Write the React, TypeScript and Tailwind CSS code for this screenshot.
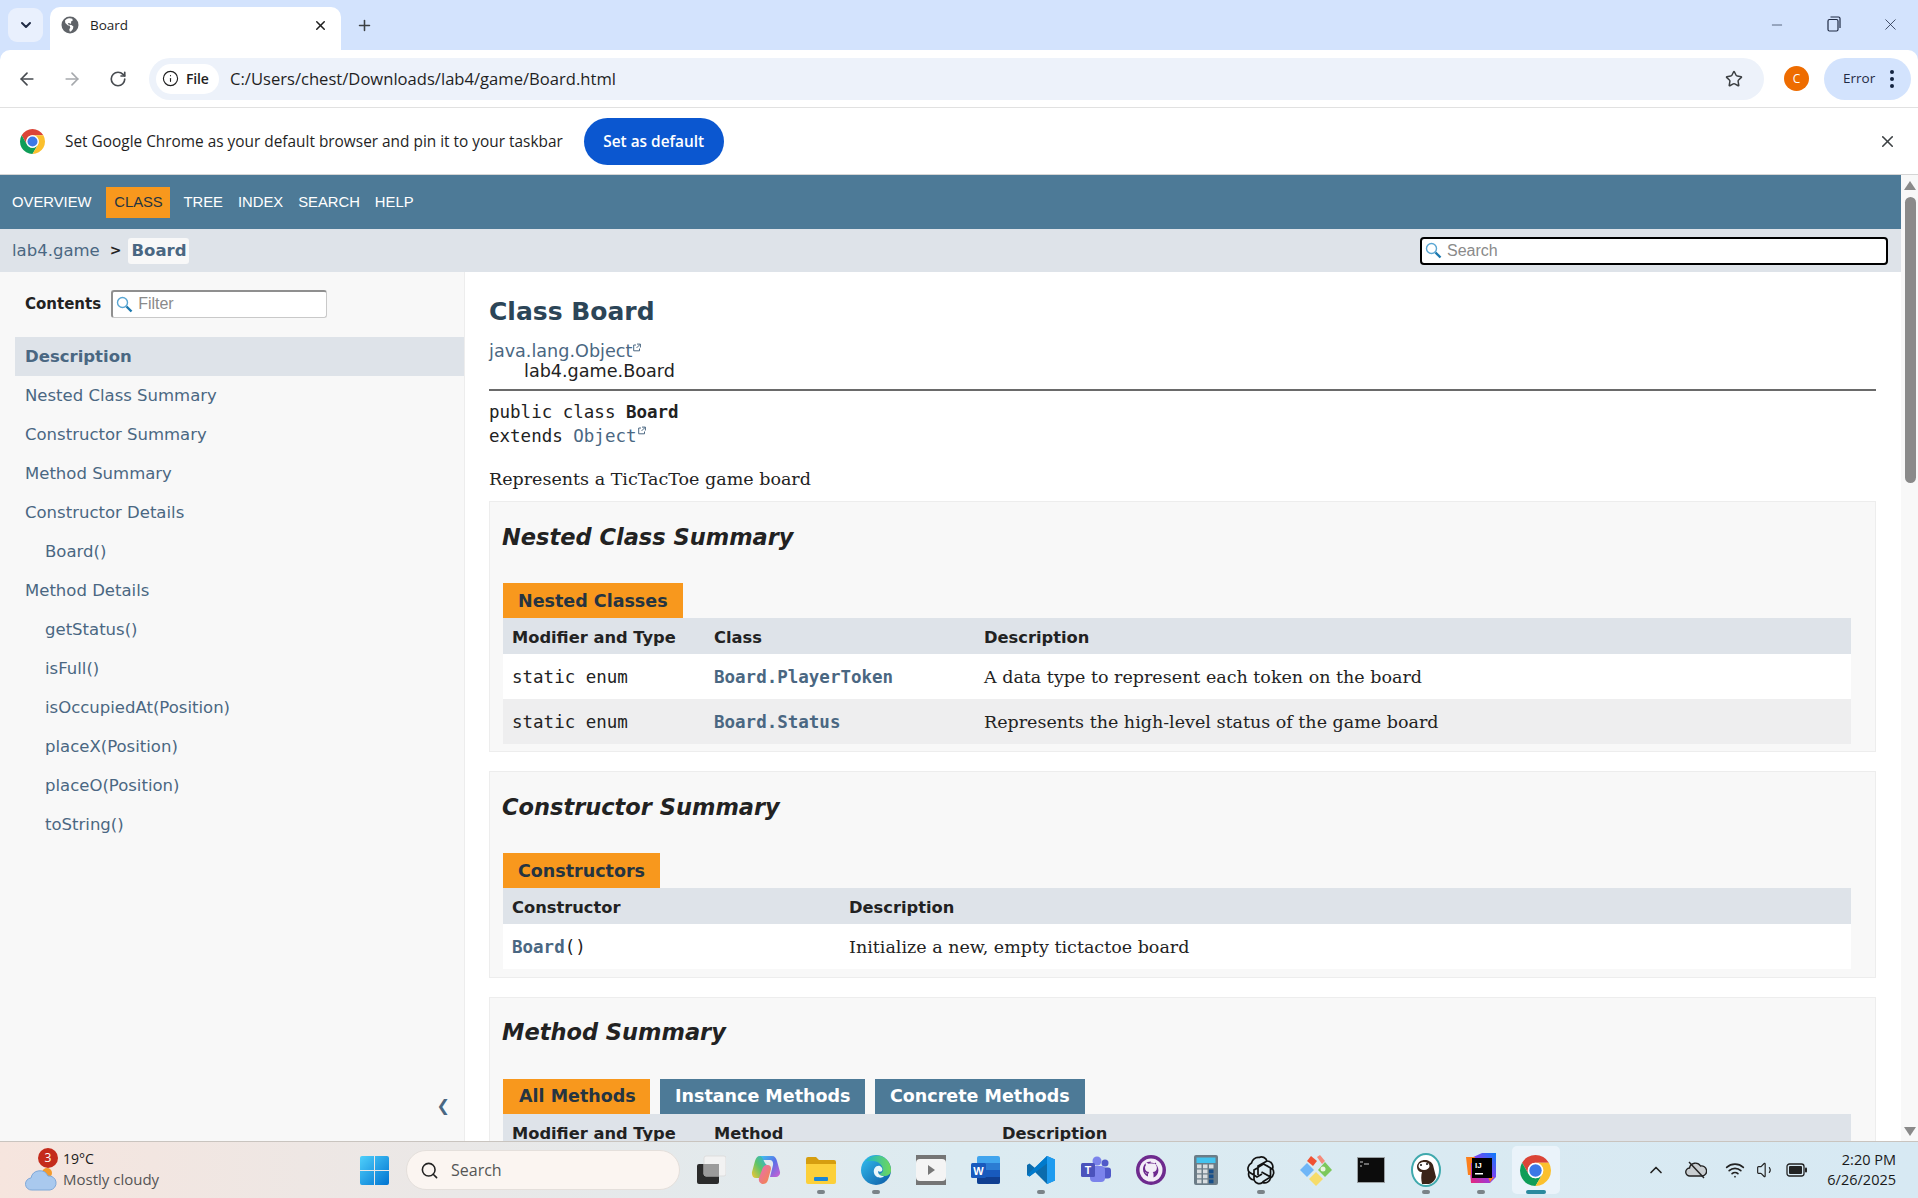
import React from "react";
import { ArrowLeft, ArrowRight, ChevronDown, ChevronUp, Info, Minus, Plus, RotateCw, Search, Star, Volume1, Wifi, X } from "lucide-react";

const chromeUi = "font-['Open_Sans',sans-serif]";
const dejavu = "font-['DejaVu_Sans',sans-serif]";
const mono = "font-['DejaVu_Sans_Mono',monospace]";
const serif = "font-['DejaVu_Serif',serif]";

function ChromeLogo({ size }: { size: number }) {
  return (
    <svg width={size} height={size} viewBox="4 4 40 40">
      <path fill="#db4437" d="M24 14H41.32A20 20 0 0 0 6.68 14L15.34 29A10 10 0 0 1 24 14Z" />
      <path fill="#0f9d58" d="M15.34 29L6.68 14A20 20 0 0 0 24 44L32.66 29A10 10 0 0 1 15.34 29Z" />
      <path fill="#fbc02d" d="M32.66 29L24 44A20 20 0 0 0 41.32 14H24A10 10 0 0 1 32.66 29Z" />
      <circle cx="24" cy="24" r="10" fill="#fff" />
      <circle cx="24" cy="24" r="8" fill="#3b78e7" />
    </svg>
  );
}

function ExternalMark() {
  return (
    <svg width="8" height="9" viewBox="0 0 8 8" className="inline-block align-top mt-[2px] ml-[1px]" fill="none" stroke="#4A6782" strokeWidth="1">
      <path d="M3 1.5H.7v5.8h5.8V5" />
      <path d="M4 .6h3.4V4M7.2.8L3.6 4.4" />
    </svg>
  );
}

function Magnifier({ size = 17 }: { size?: number }) {
  return (
    <svg width={size} height={size} viewBox="0 0 17 17" fill="none">
      <circle cx="6.5" cy="6.5" r="5" stroke="#5aa6d3" strokeWidth="1.4" />
      <path d="M10.5 10.5L15.5 15.5" stroke="#1b78ae" strokeWidth="2.4" />
    </svg>
  );
}

function TabStrip() {
  return (
    <div className="h-[50px] bg-[#d3e3fd] flex items-end pl-2 shrink-0">
      <div className="h-[34px] w-[35px] rounded-[9px] bg-[#e9f0fd] flex items-center justify-center self-start mt-2">
        <ChevronDown size={16} strokeWidth={3} color="#1f2a44" />
      </div>
      <div className={`ml-[7px] h-[43px] w-[291px] bg-white rounded-t-[10px] flex items-center pl-[11px] pr-[13px] pb-[7px] ${chromeUi}`}>
        <svg width="18" height="18" viewBox="0 0 18 18" className="shrink-0">
          <circle cx="9" cy="9" r="8.5" fill="#5f6368" />
          <path fill="#fff" d="M8 2.2c-1.6.3-3 1.1-4 2.3l.3 2.6L7 9.6h1.6l.7 2-1 1.6.4 2.2 1.2.1 2-2.6.5-2.4-2-1.4-2.7-.4-1-1.5 1.6-.3.8.9 1-.4V5.500l1.700-1.100-.5-1.700C10.400 2.300 9.200 2 8 2.200z" />
        </svg>
        <span className="ml-[11px] text-[13.500px] text-[#1f1f1f] flex-1">Board</span>
        <X size={15} strokeWidth={2.4} color="#1f1f1f" />
      </div>
      <div className="ml-[15px] mb-[8px] h-[34px] flex items-center">
        <Plus size={17} strokeWidth={2.2} color="#3c4043" />
      </div>
      <div className="flex-1" />
      <div className="self-start flex items-center h-[50px] text-[#1f2a44]">
        <Minus size={16} strokeWidth={1} className="mr-[42px]" />
        <svg width="14" height="16" viewBox="0 0 14 16" fill="none" stroke="#1f2a44" strokeWidth="1.2" className="mr-[40px] mt-[-2px]">
          <rect x="1" y="3.500" width="10" height="11.500" rx="1.500" />
          <path d="M3.500 1h8a1.500 1.500 0 0 1 1.500 1.500V12" />
        </svg>
        <X size={19} strokeWidth={1} className="mr-[18px] mt-[-2px]" />
      </div>
    </div>
  );
}

function Toolbar() {
  return (
    <div className={`h-[58px] bg-[#d3e3fd] shrink-0 ${chromeUi}`}>
      <div className="h-[57px] bg-white rounded-t-[10px] flex items-center pl-[17px] pr-[6px] border-b-0">
        <ArrowLeft size={20} strokeWidth={2} color="#474b50" />
        <ArrowRight size={20} strokeWidth={2} color="#a6a9ad" className="ml-[25px]" />
        <RotateCw size={18} strokeWidth={2.2} color="#474b50" className="ml-[27px]" />
        <div className="ml-[22px] w-[1615px] h-[42px] rounded-full bg-[#edf2fa] flex items-center pl-[7px] pr-[21px]">
          <div className="h-[30px] w-[63px] rounded-full bg-white flex items-center pl-[6px]">
            <Info size={17} strokeWidth={1.6} color="#1f1f1f" />
            <span className="ml-[7px] text-[14px] font-semibold tracking-[-0.2px] text-[#1f1f1f]">File</span>
          </div>
          <span className="ml-[11px] mt-[2px] text-[16.600px] text-[#1f1f1f] flex-1">C:/Users/chest/Downloads/lab4/game/Board.html</span>
          <Star size={18} strokeWidth={2} color="#3c4043" />
        </div>
        <div className="ml-[20px] w-[25px] h-[25px] rounded-full bg-[#ee6c00] text-white text-[12px] flex items-center justify-center">C</div>
        <div className="ml-[15px] w-[87px] h-[42px] rounded-full bg-[#d3e3fd] flex items-center pl-[19px] gap-[15px]">
          <span className="text-[13.500px] text-[#1f2a44]">Error</span>
          <span className="flex flex-col gap-[3px]">
            <span className="w-[4px] h-[4px] rounded-full bg-[#13233f]" />
            <span className="w-[4px] h-[4px] rounded-full bg-[#13233f]" />
            <span className="w-[4px] h-[4px] rounded-full bg-[#13233f]" />
          </span>
        </div>
      </div>
      <div className="h-[1px] bg-[#e1e1e1]" />
    </div>
  );
}

function InfoBar() {
  return (
    <div className={`h-[67px] bg-white border-b border-[#d5d5d5] flex items-center pl-[20px] pr-[21px] shrink-0 ${chromeUi}`}>
      <ChromeLogo size={25} />
      <span className="ml-[20px] text-[15.400px] text-[#1f1f1f] mt-[2px]">Set Google Chrome as your default browser and pin it to your taskbar</span>
      <button className="ml-[21px] w-[140px] h-[47px] pt-[1px] rounded-full bg-[#0b57d0] text-white text-[15.400px] font-semibold">Set as default</button>
      <div className="flex-1" />
      <X size={19} strokeWidth={2} color="#3c4043" />
    </div>
  );
}

function JavadocNav() {
  return (
    <>
      <div className="h-[54px] bg-[#4D7A97] flex items-center pl-[12px] font-['Liberation_Sans',sans-serif] text-[14.800px] text-white shrink-0">
        <span>OVERVIEW</span>
        <span className="ml-[15px] w-[64px] h-[31px] bg-[#F8981D] text-[#253441] flex items-center justify-center">CLASS</span>
        <span className="ml-[13px]">TREE</span>
        <span className="ml-[15px]">INDEX</span>
        <span className="ml-[15px]">SEARCH</span>
        <span className="ml-[15px]">HELP</span>
      </div>
      <div className="h-[43px] bg-[#dee3e9] flex items-center pl-[12px] pr-[13px] shrink-0">
        <span className={`${dejavu} mt-[1px] text-[16.500px] text-[#4A6782]`}>lab4.game</span>
        <span className={`${dejavu} ml-[10px] text-[14px] font-bold text-[#222]`}>&gt;</span>
        <span className={`${dejavu} ml-[7px] px-[3px] pt-[1px] h-[26px] flex items-center rounded-[3px] bg-[#f8f8f8] text-[16.500px] font-bold text-[#4A6782]`}>Board</span>
        <div className="flex-1" />
        <div className="w-[468px] h-[28px] rounded-[4px] border-2 border-black bg-white flex items-center pl-[3px]">
          <Magnifier />
          <span className="ml-[5px] font-['Liberation_Sans',sans-serif] text-[16px] text-[#8a8a8a]">Search</span>
        </div>
      </div>
    </>
  );
}

function Sidebar() {
  const items: [string, boolean][] = [
    ["Nested Class Summary", false],
    ["Constructor Summary", false],
    ["Method Summary", false],
    ["Constructor Details", false],
    ["Board()", true],
    ["Method Details", false],
    ["getStatus()", true],
    ["isFull()", true],
    ["isOccupiedAt(Position)", true],
    ["placeX(Position)", true],
    ["placeO(Position)", true],
    ["toString()", true],
  ];
  return (
    <div className={`w-[465px] shrink-0 bg-[#f8f8f8] border-r border-[#ededed] flex flex-col ${dejavu}`}>
      <div className="h-[65px] pl-[25px] flex items-center shrink-0">
        <span className="text-[15px] font-bold text-[#222]">Contents</span>
        <div className="ml-[10px] w-[216px] h-[28px] -mt-[2px] bg-white rounded-[3px] border border-[#c9c9c9] border-t-2 border-l-2 border-t-[#8f8f8f] border-l-[#8f8f8f] flex items-center pl-[3px]">
          <Magnifier />
          <span className="ml-[5px] font-['Liberation_Sans',sans-serif] text-[16px] text-[#8a8a8a]">Filter</span>
        </div>
      </div>
      <div className="ml-[15px] h-[39px] bg-[#dee3e9] pl-[10px] pt-[1px] flex items-center text-[16.500px] font-bold text-[#4A6782] shrink-0">Description</div>
      {items.map(([label, nested]) => (
        <div key={label} className={`h-[39px] pt-[1px] flex items-center shrink-0 text-[16.500px] text-[#4A6782] ${nested ? "pl-[45px]" : "pl-[25px]"}`}>
          {label}
        </div>
      ))}
      <div className="flex-1" />
      <div className="h-[72px] pr-[14px] pb-[23px] flex items-end justify-end text-[#4A6782] text-[16px] shrink-0">❮</div>
    </div>
  );
}

function SummaryTable({ cols, head, rows }: { cols: string; head: string[]; rows: React.ReactNode[][] }) {
  return (
    <>
      <div className={`grid h-[36px] pt-[4px] items-center bg-[#dee3e9] pl-[9px] text-[16.300px] font-bold text-[#222] ${cols}`}>
        {head.map((h) => (
          <div key={h}>{h}</div>
        ))}
      </div>
      {rows.map((r, i) => (
        <div key={i} className={`grid h-[45px] pt-[1px] items-center pl-[9px] text-[#222] ${cols} ${i % 2 === 0 ? "bg-white" : "bg-[#eeeeef]"}`}>
          {r.map((c, j) => (
            <div key={j}>{c}</div>
          ))}
        </div>
      ))}
    </>
  );
}

const code = `${mono} text-[17.500px]`;
const codeLink = `${mono} text-[17.500px] font-bold text-[#4A6782]`;
const desc = `${serif} text-[17.500px] text-[#222]`;

function Content() {
  return (
    <div className={`flex-1 min-w-0 bg-white pl-[24px] pr-[25px] overflow-hidden ${dejavu}`}>
      <h1 className="mt-[25px] h-[30px] leading-[30px] text-[25px] font-bold text-[#2c4557]">Class Board</h1>
      <div className="mt-[14px] h-[20px] leading-[20px] text-[17.600px] text-[#4A6782]">
        java.lang.Object<ExternalMark />
      </div>
      <div className="pl-[35px] h-[20px] leading-[20px] text-[17.600px] text-[#222]">lab4.game.Board</div>
      <div className="mt-[8px] h-[2px] bg-[#6a6a6a]" />
      <div className={`mt-[9px] h-[24px] leading-[24px] ${code} text-[#222]`}>
        public class <b>Board</b>
      </div>
      <div className={`h-[25px] leading-[25px] ${code} text-[#222]`}>
        extends <span className="text-[#4A6782]">Object</span><ExternalMark />
      </div>
      <div className={`mt-[17px] h-[26px] leading-[26px] ${desc}`}>Represents a TicTacToe game board</div>

      <section className="mt-[9px] h-[251px] bg-[#f8f8f8] border border-[#ededed] pl-[13px] pr-[24px]">
        <h2 className="mt-[20px] h-[30px] leading-[30px] -ml-[1px] text-[22.500px] font-bold italic text-[#222]">Nested Class Summary</h2>
        <div className="mt-[31px] w-[180px] h-[35px] pt-[2px] bg-[#F8981D] flex items-center pl-[15px] text-[17.500px] font-bold text-[#253441]">Nested Classes</div>
        <SummaryTable
          cols="grid-cols-[202px_270px_1fr]"
          head={["Modifier and Type", "Class", "Description"]}
          rows={[
            [<span className={code}>static enum</span>, <span className={codeLink}>Board.PlayerToken</span>, <span className={desc}>A data type to represent each token on the board</span>],
            [<span className={code}>static enum</span>, <span className={codeLink}>Board.Status</span>, <span className={desc}>Represents the high-level status of the game board</span>],
          ]}
        />
      </section>

      <section className="mt-[19px] h-[207px] bg-[#f8f8f8] border border-[#ededed] pl-[13px] pr-[24px]">
        <h2 className="mt-[20px] h-[30px] leading-[30px] -ml-[1px] text-[22.500px] font-bold italic text-[#222]">Constructor Summary</h2>
        <div className="mt-[31px] w-[157px] h-[35px] pt-[2px] bg-[#F8981D] flex items-center pl-[15px] text-[17.500px] font-bold text-[#253441]">Constructors</div>
        <SummaryTable
          cols="grid-cols-[337px_1fr]"
          head={["Constructor", "Description"]}
          rows={[
            [<span className={code}><span className={codeLink}>Board</span>()</span>, <span className={desc}>Initialize a new, empty tictactoe board</span>],
          ]}
        />
      </section>

      <section className="mt-[19px] h-[260px] bg-[#f8f8f8] border border-[#ededed] pl-[13px] pr-[24px]">
        <h2 className="mt-[19px] h-[30px] leading-[30px] -ml-[1px] text-[22.500px] font-bold italic text-[#222]">Method Summary</h2>
        <div className="mt-[32px] flex gap-[10px] h-[35px] text-[17.500px] font-bold">
          <div className="w-[147px] pb-[1px] bg-[#F8981D] flex items-center pl-[16px] text-[#253441]">All Methods</div>
          <div className="w-[205px] pb-[1px] bg-[#4D7A97] flex items-center pl-[15px] text-white">Instance Methods</div>
          <div className="w-[210px] pb-[1px] bg-[#4D7A97] flex items-center pl-[15px] text-white">Concrete Methods</div>
        </div>
        <SummaryTable cols="grid-cols-[202px_288px_1fr]" head={["Modifier and Type", "Method", "Description"]} rows={[]} />
      </section>
    </div>
  );
}

function Scrollbar() {
  return (
    <div className="w-[17px] shrink-0 bg-[#f8f8f8] flex flex-col items-center pt-[6px] pb-[5px] pl-[1px]">
      <div className="w-0 h-0 border-l-[6px] border-r-[6px] border-b-[9px] border-l-transparent border-r-transparent border-b-[#8a8a8a]" />
      <div className="mt-[7px] w-[11px] h-[286px] rounded-full bg-[#8a8a8a]" />
      <div className="flex-1" />
      <div className="w-0 h-0 border-l-[6px] border-r-[6px] border-t-[9px] border-l-transparent border-r-transparent border-t-[#8a8a8a]" />
    </div>
  );
}

function WinStart() {
  return (
    <svg width="29" height="29" viewBox="0 0 29 29">
      <defs>
        <linearGradient id="win" x1="0" y1="0" x2="1" y2="1">
          <stop offset="0" stopColor="#4fd0fb" />
          <stop offset="1" stopColor="#0073d1" />
        </linearGradient>
      </defs>
      <path fill="url(#win)" d="M0 2a2 2 0 0 1 2-2h12v14H0zM15 0h12a2 2 0 0 1 2 2v12H15zM0 15h14v14H2a2 2 0 0 1-2-2zM15 15h14v12a2 2 0 0 1-2 2H15z" />
    </svg>
  );
}

function TaskIcon({ running, active, children }: { running?: boolean; active?: boolean; children: React.ReactNode }) {
  return (
    <div className="w-[55px] flex justify-center">
      <div className={`relative w-[48px] h-[48px] flex items-center justify-center rounded-[5px] ${active ? "bg-[#eaf3fa]" : ""}`}>
        {children}
        {running && (
          <span className={`absolute bottom-[0px] h-[4px] rounded-full ${active ? "w-[20px] bg-[#2a8a9e]" : "w-[8px] bg-[#7a8388]"}`} />
        )}
      </div>
    </div>
  );
}

function TaskIcons() {
  return (
    <div className="flex items-center ml-[2px]">
      <TaskIcon>
        <svg width="30" height="30" viewBox="0 0 30 30">
          <rect x="1" y="9" width="22" height="20" rx="2" fill="#2b2b2b" />
          <rect x="8" y="1" width="22" height="20" rx="2" fill="#f2f2f2" stroke="#ddd" />
          <rect x="8" y="9" width="15" height="12" fill="#9b9b9b" />
        </svg>
      </TaskIcon>
      <TaskIcon>
        <svg width="30" height="30" viewBox="0 0 30 30">
          <defs>
            <linearGradient id="cp1" x1="0" y1="0" x2="1" y2="1"><stop offset="0" stopColor="#3fc5f0" /><stop offset="0.5" stopColor="#5a6fe8" /><stop offset="1" stopColor="#d45fd0" /></linearGradient>
            <linearGradient id="cp2" x1="0" y1="1" x2="1" y2="0"><stop offset="0" stopColor="#f7c531" /><stop offset="0.5" stopColor="#5cc46a" /><stop offset="1" stopColor="#2ab0e8" /></linearGradient>
            <linearGradient id="cp3" x1="0" y1="0" x2="1" y2="1"><stop offset="0" stopColor="#e66ac0" /><stop offset="1" stopColor="#f58a3c" /></linearGradient>
          </defs>
          <path fill="url(#cp1)" d="M9 1h12c3 0 4 2 5 5l3 11c.5 3-2 5-4 5h-6l3-12c.6-3-1-5-3-5H9z" />
          <path fill="url(#cp2)" d="M9 1c-3 0-4 2-5 5L1 17c-.5 3 1 6 4 6h6l2-8c.6-2 1-4 3-5-3-1-4-9-7-9z" />
          <path fill="url(#cp3)" d="M16 10c3 0 4 1 4 4l-3 11c-1 3-3 4-5 4s-5-2-4-6l3-8c1-3 2-5 5-5z" />
        </svg>
      </TaskIcon>
      <TaskIcon running>
        <svg width="30" height="28" viewBox="0 0 30 28">
          <path fill="#d69e0f" d="M0 3a2 2 0 0 1 2-2h8l3 3h15a2 2 0 0 1 2 2v4H0z" />
          <path fill="#fcd03a" d="M0 8h30v18a2 2 0 0 1-2 2H2a2 2 0 0 1-2-2z" />
          <rect x="8" y="21" width="14" height="4" rx="1" fill="#1a86d6" />
        </svg>
      </TaskIcon>
      <TaskIcon running>
        <svg width="30" height="30" viewBox="0 0 30 30">
          <defs>
            <linearGradient id="ed1" x1="0" y1="0" x2="1" y2="1"><stop offset="0" stopColor="#35c1f1" /><stop offset="1" stopColor="#0c59a4" /></linearGradient>
            <linearGradient id="ed2" x1="0" y1="0" x2="1" y2="0"><stop offset="0" stopColor="#1fb6c9" /><stop offset="1" stopColor="#6fd85a" /></linearGradient>
          </defs>
          <circle cx="15" cy="15" r="15" fill="url(#ed1)" />
          <path fill="url(#ed2)" d="M5 6C9 1 15 0 20 1c6 2 10 8 10 14 0 4-3 6-7 6-3 0-5-1-6-2 3 0 5-2 5-4 0-5-5-9-10-9-3 0-5 0-7 0z" />
          <path fill="#eaf7fb" d="M13 18c-1-4 2-8 6-7 2 1 3 3 2 5-1 1-3 1-4 0 0 3 2 5 6 5-2 3-9 2-10-3z" />
        </svg>
      </TaskIcon>
      <TaskIcon>
        <svg width="30" height="30" viewBox="0 0 30 30">
          <rect width="30" height="30" fill="#757575" />
          <rect y="4" x="0" width="30" height="22" rx="4" fill="#f4f4f4" />
          <path d="M12 10l7 5-7 5z" fill="#777" />
        </svg>
      </TaskIcon>
      <TaskIcon>
        <svg width="30" height="30" viewBox="0 0 30 30">
          <rect x="6" y="1" width="23" height="28" rx="2" fill="#41a5ee" />
          <rect x="6" y="8" width="23" height="7" fill="#2b7cd3" />
          <rect x="6" y="15" width="23" height="7" fill="#185abd" />
          <path d="M6 22h23v5a2 2 0 0 1-2 2H8a2 2 0 0 1-2-2z" fill="#103f91" />
          <rect x="0" y="8" width="15" height="15" rx="1.500" fill="#185abd" />
          <text x="7.500" y="19.500" textAnchor="middle" fontSize="11" fontWeight="700" fill="#fff" fontFamily="Liberation Sans">W</text>
        </svg>
      </TaskIcon>
      <TaskIcon running>
        <svg width="30" height="30" viewBox="0 0 30 30">
          <path fill="#0065a9" d="M21 1L9 13 3.500 8.500 1 10v10l2.500 1.500L9 17l12 12z" opacity="0.95" />
          <path fill="#007acc" d="M21 1l8 3.500v21L21 29V8.500L7 19l-3.500 2.500L1 20l20-19z" />
          <path fill="#1f9cf0" d="M21 1l8 3.500v21L21 29z" />
        </svg>
      </TaskIcon>
      <TaskIcon>
        <svg width="30" height="30" viewBox="0 0 30 30">
          <circle cx="24" cy="8" r="3.500" fill="#5059c9" />
          <rect x="19" y="12.500" width="11" height="11" rx="3" fill="#5059c9" />
          <circle cx="16" cy="6" r="4.500" fill="#7b83eb" />
          <rect x="9" y="11" width="15" height="16" rx="4" fill="#7b83eb" />
          <rect x="0" y="8" width="14" height="14" rx="1.500" fill="#4b53bc" />
          <text x="7" y="19" textAnchor="middle" fontSize="10.500" fontWeight="700" fill="#fff" fontFamily="Liberation Sans">T</text>
        </svg>
      </TaskIcon>
      <TaskIcon>
        <svg width="30" height="30" viewBox="0 0 30 30">
          <circle cx="15" cy="15" r="15" fill="#6e2a8e" />
          <circle cx="15" cy="15" r="11.500" fill="#f3eef7" />
          <path fill="#6e2a8e" d="M15 6.500c-4.700 0-8 3.400-8 7.700 0 3.400 2.100 6.200 5 7.300v-2.800c-1.700.4-2.600-.6-3-1.600 0 0 .9.100 1.500 1 .8 1 2 .6 2 .6 0-.9.400-1.300.7-1.700-2.200-.3-4.200-1.300-4.200-4.300 0-1 .4-1.800.9-2.400-.1-.3-.4-1.300.1-2.500 0 0 1.200-.1 2.600 1 1.300-.4 3.400-.4 4.700 0 1.400-1.100 2.600-1 2.600-1 .5 1.200.2 2.200.1 2.500.5.600.9 1.400.9 2.400 0 3-2 4-4.200 4.300.4.400.8 1 .8 2v3.500c2.800-1.100 4.900-3.900 4.900-7.300 0-4.300-3.300-7.700-8-7.700z" />
        </svg>
      </TaskIcon>
      <TaskIcon>
        <svg width="24" height="30" viewBox="0 0 24 30">
          <rect width="24" height="30" rx="2" fill="#6b7c87" />
          <rect x="2.500" y="2.500" width="19" height="5.500" fill="#43c3ee" />
          {[10, 15, 20, 25].map((y) => [3, 9, 15].map((x) => (
            <rect key={`${x}-${y}`} x={x} y={y - 0.5} width="4.500" height="3.800" fill={x === 15 && y > 14 ? "#174f8a" : "#d8dde0"} />
          )))}
        </svg>
      </TaskIcon>
      <TaskIcon running>
        <svg width="30" height="30" viewBox="0 0 30 30" fill="none" stroke="#111" strokeWidth="1.700">
          <path d="M13 2.500c3-1.500 7 0 8 3.500 3.500 0 7 3.500 5.500 8 2 2.500 1.500 7-2 9-.5 3.500-4.500 6-8 4.500-3 2-7 1-8.500-2.500-3.500 0-6.500-4-5-8-2-3-1-7 2.500-9 .5-3 4-6 7.500-5.500z" />
          <path d="M21 6l-9 5v9M26.500 14l-9-5-5 3M24.500 23l0-10-4-2.500M16.500 27l8-5-9-5M8 25l0-10 5-3M3 17l8 5 5-3" />
        </svg>
      </TaskIcon>
      <TaskIcon>
        <svg width="32" height="32" viewBox="0 0 32 32">
          <path fill="#f05133" d="M11 2l6 5-4 5-6-5z" />
          <path fill="#f58a7a" d="M17 3l3-2 5 6-3 3z" />
          <path fill="#6fb6f7" d="M7 9l7 7-7 7-7-7z" />
          <path fill="#7cc85a" d="M25 8l7 8-7 7-7-7z" />
          <circle cx="23" cy="15" r="2.500" fill="#eaf5e0" />
          <path fill="#f6dc6a" d="M16 18l7 7-7 7-7-7z" />
        </svg>
      </TaskIcon>
      <TaskIcon>
        <svg width="28" height="26" viewBox="0 0 28 26">
          <rect width="28" height="26" fill="#9aa0a3" />
          <rect x="1" y="1" width="26" height="24" fill="#0c0c0c" />
          <path d="M3 5h3M7 7h5M3 9h2" stroke="#ccc" strokeWidth="1" />
        </svg>
      </TaskIcon>
      <TaskIcon running>
        <svg width="30" height="34" viewBox="0 0 30 34">
          <ellipse cx="15" cy="17" rx="14" ry="16" fill="#fff" stroke="#3fa9ad" strokeWidth="2" />
          <path fill="#3a2418" d="M6 13c1-4 4-6 8-6 3 0 7 2 8 5l1 4 1 4 1 4c-1 4-5 7-7 7l-7 0c-1-5-1-8 0-12-3 0-5-2-5-6z" />
          <ellipse cx="13" cy="13" rx="5.500" ry="4" fill="#fff" />
          <circle cx="10" cy="12" r="1" fill="#111" />
          <circle cx="16" cy="11" r="1" fill="#111" />
        </svg>
      </TaskIcon>
      <TaskIcon running>
        <svg width="30" height="34" viewBox="0 0 30 34">
          <defs>
            <linearGradient id="ij" x1="0" y1="1" x2="1" y2="0"><stop offset="0" stopColor="#f0246e" /><stop offset="0.5" stopColor="#8a3df0" /><stop offset="1" stopColor="#087cfa" /></linearGradient>
          </defs>
          <path fill="url(#ij)" d="M3 6l13-6h14v24l-6 6H5z" />
          <path fill="#fc801d" d="M0 4h9v6H5L5 22 2 22z" />
          <path fill="#fc801d" d="M22 24h6l-4 5z" />
          <rect x="6" y="5" width="20" height="20" fill="#000" />
          <text x="9" y="15" fontSize="8" fontWeight="700" fill="#fff" fontFamily="Liberation Sans">IJ</text>
          <rect x="9" y="20" width="8" height="1.500" fill="#fff" />
        </svg>
      </TaskIcon>
      <TaskIcon running active>
        <ChromeLogo size={31} />
      </TaskIcon>
    </div>
  );
}

function Taskbar() {
  return (
    <div className={`h-[57px] shrink-0 border-t border-[#c9c4bf] bg-gradient-to-r from-[#f6e5de] via-[#dcebf1] to-[#d7e9f3] flex items-center ${chromeUi}`}>
      <div className="w-[375px] shrink-0 flex items-center pl-[25px]">
        <div className="relative w-[32px] h-[36px]">
          <svg width="32" height="24" viewBox="0 0 32 24" className="absolute left-0 -bottom-[3px]">
            <circle cx="22" cy="6" r="5" fill="#f39a2c" />
            <path d="M7 23a6 6 0 0 1-1-12 9 9 0 0 1 17-2 7 7 0 0 1 2 14z" fill="#a9c9ee" stroke="#7fa8d8" strokeWidth="1" />
          </svg>
          <span className="absolute -top-[4px] left-[13px] w-[20px] h-[20px] rounded-full bg-[#c42b1c] text-white text-[12px] flex items-center justify-center">3</span>
        </div>
        <div className="ml-[6px] flex flex-col leading-[20px] -mt-[2px]">
          <span className="text-[14px] text-[#1a1a1a]">19°C</span>
          <span className="text-[15px] text-[#555]">Mostly cloudy</span>
        </div>
      </div>
      <div className="w-[32px] shrink-0 -ml-[17px] flex justify-center">
        <WinStart />
      </div>
      <div className="ml-[16px] w-[274px] h-[40px] rounded-full bg-[#fbf5f1] border border-[#e4dfdb] flex items-center pl-[13px] shrink-0">
        <Search size={19} strokeWidth={2} color="#222" />
        <span className="ml-[12px] text-[16px] text-[#555]">Search</span>
      </div>
      <div className="ml-[1px] shrink-0">
        <TaskIcons />
      </div>
      <div className="flex-1" />
      <ChevronUp size={20} strokeWidth={2} color="#222" />
      <svg width="22" height="20" viewBox="0 0 22 20" fill="none" stroke="#222" strokeWidth="1.400" className="ml-[19px]">
        <path fill="#c9ced1" d="M5 16a4 4 0 0 1-.5-8 6 6 0 0 1 11-2 5 5 0 0 1 2 10z" />
        <path d="M4 2l15 16" />
      </svg>
      <Wifi size={20} strokeWidth={2} color="#222" className="ml-[18px]" />
      <Volume1 size={20} strokeWidth={1.400} color="#222" className="ml-[11px]" />
      <svg width="22" height="14" viewBox="0 0 22 14" className="ml-[10px]">
        <rect x="1" y="1" width="17" height="12" rx="2.500" fill="none" stroke="#222" strokeWidth="1.300" />
        <rect x="3" y="3" width="13" height="8" rx="1" fill="#222" />
        <rect x="19" y="4.500" width="2" height="5" rx="1" fill="#222" />
      </svg>
      <div className="ml-[19px] mr-[22px] flex flex-col items-end leading-[20px] text-[14.500px] text-[#1a1a1a]">
        <span>2:20 PM</span>
        <span>6/26/2025</span>
      </div>
    </div>
  );
}

export default function App() {
  return (
    <div className="w-[1918px] h-[1198px] flex flex-col overflow-hidden bg-white">
      <TabStrip />
      <Toolbar />
      <InfoBar />
      <div className="flex-1 min-h-0 flex">
        <div className="flex-1 min-w-0 flex flex-col">
          <JavadocNav />
          <div className="flex-1 min-h-0 flex">
            <Sidebar />
            <Content />
          </div>
        </div>
        <Scrollbar />
      </div>
      <Taskbar />
    </div>
  );
}
